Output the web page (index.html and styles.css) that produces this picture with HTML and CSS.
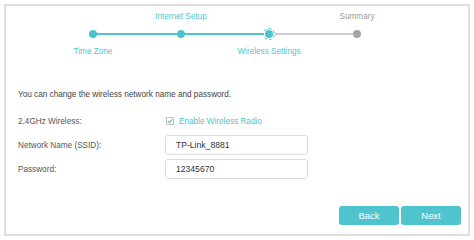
FILE: index.html
```html
<!DOCTYPE html>
<html lang="en">
<head>
  <meta charset="UTF-8">
  <title>Quick Setup - Wireless</title>
  <link rel="stylesheet" href="styles.css">
</head>
<body>

  <div class="panel">
    <div class="stepper">
      <div class="step done first">
        <span class="step-label"></span>
        <div class="step-track"><span class="dot"></span></div>
        <span class="step-label">Time Zone</span>
      </div>
      <div class="step done">
        <span class="step-label">Internet Setup</span>
        <div class="step-track"><span class="dot"></span></div>
        <span class="step-label"></span>
      </div>
      <div class="step current">
        <span class="step-label"></span>
        <div class="step-track"><span class="ring"><span class="dot"></span></span></div>
        <span class="step-label">Wireless Settings</span>
      </div>
      <div class="step todo last">
        <span class="step-label">Summary</span>
        <div class="step-track"><span class="dot"></span></div>
        <span class="step-label"></span>
      </div>
    </div>

    <div class="content">
      <p class="intro">You can change the wireless network name and password.</p>

      <div class="form-row">
        <label>2.4GHz Wireless:</label>
        <label class="check">
          <span class="check-box">
            <svg width="6" height="6" viewBox="0 0 6 6"><path d="M0.8 3.1 L2.4 4.6 L5.2 1.4" fill="none" stroke="#4ec3cc" stroke-width="1.2"/></svg>
          </span>
          Enable Wireless Radio
        </label>
      </div>
      <div class="form-row">
        <label for="ssid">Network Name (SSID):</label>
        <input type="text" id="ssid" value="TP-Link_8881">
      </div>
      <div class="form-row">
        <label for="pwd">Password:</label>
        <input type="text" id="pwd" value="12345670">
      </div>
    </div>

    <div class="actions">
      <button class="btn">Back</button>
      <button class="btn">Next</button>
    </div>
  </div>

</body>
</html>
```

FILE: styles.css
```css
* {
  box-sizing: border-box;
  margin: 0;
  padding: 0;
}

body {
  font-family: 'Liberation Sans', Arial, sans-serif;
  background-color: #fff;
  color: #444;
  width: 474px;
  height: 240px;
  padding: 4px;
}

.panel {
  width: 466px;
  height: 232px;
  border: 2px solid #dedede;
  display: flex;
  flex-direction: column;
}

/* stepper */
.stepper {
  display: flex;
  padding: 5px 0 0 43px;
}

.step {
  width: 88px;
  display: flex;
  flex-direction: column;
  align-items: center;
}

.step-label {
  height: 12px;
  line-height: 12px;
  font-size: 8.2px;
  color: #55c4cf;
  white-space: nowrap;
}

.step.todo .step-label {
  color: #9a9a9a;
}

.step-track {
  width: 100%;
  height: 12px;
  margin: 5px 0 6px;
  display: flex;
  align-items: center;
  justify-content: center;
  background: linear-gradient(#4ec3cc, #4ec3cc) center / 100% 2px no-repeat;
}

.step.first .step-track {
  background: linear-gradient(#4ec3cc, #4ec3cc) right center / 50% 2px no-repeat;
}

.step.current .step-track {
  background:
    linear-gradient(#4ec3cc, #4ec3cc) left center / 50% 2px no-repeat,
    linear-gradient(#cfcfcf, #cfcfcf) right center / 50% 2px no-repeat;
}

.step.last .step-track {
  background: linear-gradient(#cfcfcf, #cfcfcf) left center / 50% 2px no-repeat;
}

.dot {
  width: 8px;
  height: 8px;
  border-radius: 50%;
  background-color: #4ec3cc;
}

.step.todo .dot {
  background-color: #a3a3ab;
}

.ring {
  width: 12px;
  height: 12px;
  border-radius: 50%;
  border: 1px dashed #4ec3cc;
  background: #fff;
  display: flex;
  align-items: center;
  justify-content: center;
}

/* form */
.content {
  padding: 31px 12px 0;
  font-size: 8.2px;
}

.intro {
  line-height: 12px;
  color: #444;
  margin-bottom: 10px;
}

.form-row {
  display: flex;
  align-items: center;
  height: 20px;
  margin-bottom: 4px;
}

.form-row > label:first-child {
  width: 147px;
  color: #555;
}

.check {
  display: flex;
  align-items: center;
  gap: 5px;
  color: #4ec3cc;
  margin-left: 1px;
}

.check-box {
  width: 8px;
  height: 8px;
  border: 1px solid #bdbdbd;
  border-radius: 1px;
  display: flex;
  align-items: center;
  justify-content: center;
}

.form-row input {
  width: 143px;
  height: 20px;
  border: 1px solid #dcdcdc;
  border-radius: 3px;
  padding-left: 10px;
  font-family: 'Liberation Sans', Arial, sans-serif;
  font-size: 8.6px;
  color: #333;
  outline: none;
}

/* buttons */
.actions {
  margin-top: auto;
  display: flex;
  justify-content: flex-end;
  gap: 2px;
  padding: 0 7px 9px 0;
}

.btn {
  width: 60px;
  height: 19px;
  border: none;
  border-radius: 3px;
  background-color: #4fc4cc;
  color: #fff;
  font-family: 'Liberation Sans', Arial, sans-serif;
  font-size: 9.4px;
  cursor: pointer;
}
```
